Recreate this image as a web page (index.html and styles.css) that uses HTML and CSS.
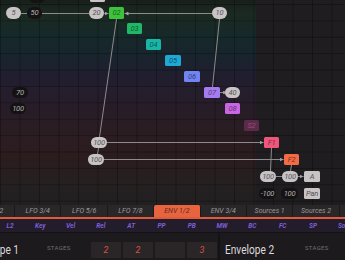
FILE: index.html
```html
<!DOCTYPE html>
<html lang="en">
  <head>
    <meta charset="utf-8" />
    <meta name="viewport" content="width=device-width, initial-scale=1.0" />
    <title>Mod Matrix</title>
    <link rel="stylesheet" href="styles.css">
  </head>
  <body>
    <div class="app">
      <div class="matrix" id="matrix">
        <svg class="wires" id="wires" width="345" height="205">
          <defs>
            <marker id="arrow" viewBox="0 0 4 4" markerWidth="4" markerHeight="4" refX="4" refY="2" orient="auto" markerUnits="userSpaceOnUse">
              <path d="M0 0L4 2L0 4z" fill="#a39ea0" />
            </marker>
            <marker id="dot" viewBox="0 0 4 4" markerWidth="3" markerHeight="3" refX="2" refY="2" markerUnits="userSpaceOnUse">
              <circle cx="2" cy="2" r="2" fill="#a39ea0" />
            </marker>
          </defs>
        </svg>
      </div>

      <div class="tabs">
        <div class="tab">LFO 1/2</div>
        <div class="tab">LFO 3/4</div>
        <div class="tab">LFO 5/6</div>
        <div class="tab">LFO 7/8</div>
        <div class="tab active">ENV 1/2</div>
        <div class="tab">ENV 3/4</div>
        <div class="tab">Sources 1</div>
        <div class="tab">Sources 2</div>
        <div class="tab">Sources 3</div>
      </div>

      <div class="sources">
        <div class="src">L2</div>
        <div class="src">Key</div>
        <div class="src">Vel</div>
        <div class="src">Rel</div>
        <div class="src">AT</div>
        <div class="src">PP</div>
        <div class="src">PB</div>
        <div class="src">MW</div>
        <div class="src">BC</div>
        <div class="src">FC</div>
        <div class="src">SP</div>
        <div class="src">Sos</div>
      </div>

      <div class="envelopes">
        <div class="env env-one">
          <div class="env-title"><span>Envelope 1</span></div>
          <div class="stages-label">STAGES</div>
          <div class="steps">
            <div class="step">2</div>
            <div class="step">2</div>
            <div class="step"></div>
            <div class="step">3</div>
          </div>
        </div>
        <div class="env env-two">
          <div class="env-title"><span>Envelope 2</span></div>
          <div class="stages-label">STAGES</div>
        </div>
      </div>
    </div>

    <script>
      const matrix = document.getElementById("matrix");
      const wires = document.getElementById("wires");

      // kind, label, x, y, w, h
      const nodes = [
        ["dark pill", "", 29, -8, 16, 11],
        ["light box", "", 90, -9, 15, 11],
        ["light pill", "5", 6, 7, 15, 12],
        ["dark pill", "50", 27, 7, 15, 12],
        ["light pill", "20", 89, 7, 15, 12],
        ["box c02", "02", 109, 7, 15, 12],
        ["light pill", "10", 212, 7, 15, 12],
        ["box c03", "03", 127, 23, 15, 11],
        ["box c04", "04", 146, 39, 15, 11],
        ["box c05", "05", 165, 55, 16, 11],
        ["box c06", "06", 184, 71, 16, 11],
        ["dark pill", "70", 12, 87, 16, 11],
        ["box c07", "07", 204, 87, 16, 11],
        ["light pill", "40", 225, 87, 15, 11],
        ["dark pill", "100", 10, 103, 16, 11],
        ["box c08", "08", 225, 103, 15, 11],
        ["box cs2", "S2", 244, 120, 15, 11],
        ["light pill", "100", 91, 137, 16, 11],
        ["box cf1", "F1", 264, 137, 15, 11],
        ["light pill", "100", 88, 154, 16, 11],
        ["box cf2", "F2", 284, 154, 15, 11],
        ["light pill", "100", 260, 171, 16, 11],
        ["light pill", "100", 282, 171, 16, 11],
        ["light box", "A", 304, 171, 16, 11],
        ["dark pill", "-100", 259, 188, 17, 11],
        ["dark pill", "100", 281, 188, 17, 11],
        ["light box", "Pan", 304, 188, 16, 11],
      ];

      // x1, y1, x2, y2, end marker
      const links = [
        [21, 13.5, 27, 13.5],
        [42, 13.5, 89, 13.5],
        [104, 13.5, 108.5, 13.5, "arrow"],
        [212, 13.5, 124.5, 13.5, "arrow"],
        [116.5, 19, 99.5, 137],
        [219.5, 19, 212.5, 87],
        [220, 92.5, 224, 92.5, "dot"],
        [107, 142.5, 263.5, 142.5, "arrow"],
        [104, 159.5, 283.5, 159.5, "arrow"],
        [98.5, 148, 97.5, 154],
        [271.5, 148, 270.5, 171],
        [291.5, 165, 290.5, 171],
        [276, 176.5, 282, 176.5],
        [298, 176.5, 303.5, 176.5, "arrow"],
      ];

      links.forEach(([x1, y1, x2, y2, end]) => {
        const line = document.createElementNS("http://www.w3.org/2000/svg", "line");
        line.setAttribute("x1", x1);
        line.setAttribute("y1", y1);
        line.setAttribute("x2", x2);
        line.setAttribute("y2", y2);
        if (end) line.setAttribute("marker-end", `url(#${end})`);
        wires.appendChild(line);
      });

      nodes.forEach(([kind, label, x, y, w, h]) => {
        const node = document.createElement("div");
        node.className = `node ${kind}`;
        node.textContent = label;
        node.style.left = `${x}px`;
        node.style.top = `${y}px`;
        node.style.width = `${w}px`;
        node.style.height = `${h}px`;
        matrix.appendChild(node);
      });
    </script>
  </body>
</html>
```

FILE: styles.css
```css
* {
  box-sizing: border-box;
}

body {
  margin: 0;
  width: 345px;
  height: 260px;
  overflow: hidden;
  background: #1c1a1c;
  font-family: Roboto, "Liberation Sans", sans-serif;
}

.app {
  display: flex;
  flex-direction: column;
  height: 260px;
}

/* matrix canvas */

.matrix {
  position: relative;
  height: 205px;
  flex: 0 0 205px;
  overflow: hidden;
  background-color: #1f1d1f;
  background-image:
    linear-gradient(90deg, rgba(0, 0, 0, 0.28) 1px, transparent 1px),
    linear-gradient(rgba(0, 0, 0, 0.28) 1px, transparent 1px),
    linear-gradient(
      #191f1b 0,
      #1b2a21 14px,
      #16292a 36px,
      #18242d 56px,
      #221e2f 78px,
      #261d2a 102px,
      #2a1d23 126px,
      #2b1c1e 158px,
      #252021 182px,
      #222021 205px
    );
  background-size: 19.5px 100%, 100% 16.4px, 256px 100%;
  background-position: 0 0, 0 4px, 0 0;
  background-repeat: repeat, repeat, no-repeat;
}

.wires {
  position: absolute;
  left: 0;
  top: 0;
}

.wires line {
  stroke: #8f8a8c;
  stroke-width: 1;
}

.node {
  position: absolute;
  display: flex;
  align-items: center;
  justify-content: center;
  font-size: 7.5px;
  font-style: italic;
  line-height: 1;
  letter-spacing: -0.2px;
}

.pill {
  border-radius: 6px;
}

.light {
  background: #c8c4c5;
  color: #565254;
}

.dark {
  background: #141213;
  color: #bab5b7;
}

.box {
  border-radius: 1.5px;
  color: rgba(0, 0, 0, 0.55);
}

.box.light {
  color: #565254;
}

.c02 { background: #3cc23c; }
.c03 { background: #1fb867; }
.c04 { background: #17b6a6; }
.c05 { background: #1ea8d4; }
.c06 { background: #7284f2; }
.c07 { background: #a67af0; }
.c08 { background: #c866e4; }
.cs2 { background: #5c2a4a; color: #93507a; }
.cf1 { background: #f0567c; }
.cf2 { background: #f26a46; }

/* tabs */

.tabs {
  flex: 0 0 14px;
  display: flex;
  background: #2a2729;
  border-bottom: 2px solid #e25a3a;
  overflow: hidden;
}

.tab {
  flex: 0 0 46.4px;
  display: flex;
  align-items: center;
  justify-content: center;
  font-size: 7px;
  font-style: italic;
  color: #9d979b;
  border-right: 1px solid #1b191a;
  white-space: nowrap;
}

.tab:first-child {
  margin-left: -31.4px;
}

.tab.active {
  background: #e8643f;
  color: #5e2a20;
  border-radius: 2px 2px 0 0;
}

/* sources row */

.sources {
  flex: 0 0 13px;
  display: flex;
  background: #221c2b;
  overflow: hidden;
}

.src {
  flex: 0 0 30.3px;
  display: flex;
  align-items: center;
  justify-content: center;
  font-size: 6.5px;
  font-weight: bold;
  font-style: italic;
  color: #7d5fd8;
}

.src:first-child {
  margin-left: -5.15px;
}

/* envelopes */

.envelopes {
  flex: 1;
  display: flex;
  border-top: 1px solid #141214;
}

.env {
  display: flex;
  align-items: flex-start;
  padding-top: 9px;
}

.env-one {
  flex: 0 0 220px;
  border-right: 2px solid #141214;
}

.env-two {
  flex: 1;
  padding-left: 5px;
}

.env-title {
  display: flex;
  white-space: nowrap;
  font-size: 13px;
  line-height: 15px;
  color: #dcd8dc;
}

.env-one .env-title {
  width: 19px;
  justify-content: flex-end;
}

.env-one .env-title span {
  transform: scaleX(0.78);
  transform-origin: right center;
}

.env-two .env-title {
  width: 80px;
}

.env-two .env-title span {
  transform: scaleX(0.78);
  transform-origin: left center;
}

.stages-label {
  font-size: 6px;
  letter-spacing: 0.3px;
  color: #716d71;
  padding-top: 2px;
}

.env-one .stages-label {
  width: 72px;
  padding-left: 28px;
}

.steps {
  display: flex;
  gap: 2px;
}

.step {
  width: 30px;
  height: 16px;
  display: flex;
  align-items: center;
  justify-content: center;
  background: #2a2628;
  border-radius: 1px;
  font-size: 9px;
  font-style: italic;
  color: #d9503e;
}
```
